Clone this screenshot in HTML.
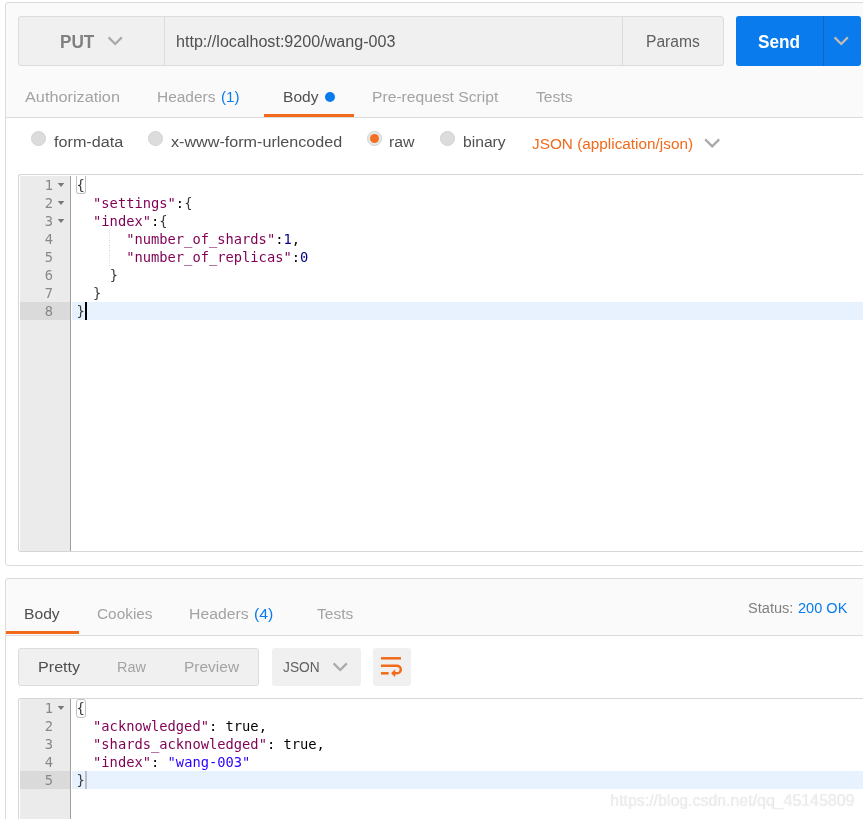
<!DOCTYPE html>
<html lang="en">
<head>
<meta charset="utf-8">
<title>PUT wang-003</title>
<style>
*{box-sizing:border-box;margin:0;padding:0}
html,body{width:863px;height:819px;overflow:hidden;background:#fff}
body{position:relative;will-change:transform;font-family:"Liberation Sans","DejaVu Sans",sans-serif;color:#505050}
.abs{position:absolute}
.t{position:absolute;white-space:nowrap;line-height:20px;height:20px;font-size:15.4px;transform-origin:0 50%}
.panel{position:absolute;background:#fafafa;border:1px solid #dbdbdb;border-radius:4px 0 0 4px;border-right:0}
.white{position:absolute;background:#fff}
.hl{position:absolute;background:#dbdbdb;height:1px}
.or{position:absolute;background:#f26a1b;height:3px}
.grey{color:#a3a3a3}
.blue{color:#097bed}
.radio{position:absolute;width:15px;height:15px;border-radius:50%;background:#dcdcdc;border:1px solid #d2d2d2}
.radio.on{background:#e6e9ec;border-color:#d0d0d0}
.radio.on::after{content:"";position:absolute;left:2px;top:2px;width:9px;height:9px;border-radius:50%;background:#f37021}
.mono{font-family:"DejaVu Sans Mono","Liberation Mono",monospace;font-size:13.76px;line-height:18px;white-space:pre;color:#000}
.editor{position:absolute;background:#fff;border:1px solid #d6d6d6;border-right:0;border-radius:3px 0 0 3px}
.gutter{position:absolute;background:#ebebeb}
.gline{position:absolute;width:1px;background:#a0a0a0}
.gact{position:absolute;background:#dadada;height:18px}
.act{position:absolute;background:#e8f2fe;height:18px}
.ln{position:absolute;text-align:right;color:#888}
.ln div,.code div{height:18px}
.code{position:absolute}
.k{color:#7f0055}
.n{color:#00008c}
.s{color:#2a00ff}
.b{color:#3c3c3c}
.brk{position:absolute;border:1px solid #c0c0c0;border-radius:3px;width:10px;height:19px}
.guide{position:absolute;width:1px;background-image:linear-gradient(#cfcfcf 50%,transparent 50%);background-size:1px 2.5px}
.cursor{position:absolute;width:2px;height:18px;background:#000}
/*FIT*/
#put{left:60.40px;transform:scaleX(0.9174)}
#url{left:176.00px;transform:scaleX(1.0069)}
#params{left:646.20px;transform:scaleX(0.9766)}
#send{left:757.50px;transform:scaleX(0.9205)}
#t_auth{left:25.45px;transform:scaleX(1.0572)}
#t_head{left:157.20px;transform:scaleX(1.0045)}
#t_head_n{left:221.20px;transform:scaleX(0.9853)}
#t_body{left:282.85px;transform:scaleX(1.0120)}
#t_pre{left:372.35px;transform:scaleX(1.0183)}
#t_tests{left:535.80px;transform:scaleX(1.0209)}
#r_form{left:53.85px;transform:scaleX(1.0511)}
#r_url{left:170.75px;transform:scaleX(1.0483)}
#r_raw{left:388.65px;transform:scaleX(1.0313)}
#r_bin{left:463.10px;transform:scaleX(1.0170)}
#r_json{left:532.10px;transform:scaleX(0.9963)}
#b_body{left:23.90px;transform:scaleX(1.0174)}
#b_cook{left:97.25px;transform:scaleX(0.9991)}
#b_head{left:188.90px;transform:scaleX(1.0247)}
#b_head_n{left:253.70px;transform:scaleX(1.0294)}
#b_tests{left:316.60px;transform:scaleX(1.0083)}
#status{left:748.10px;transform:scaleX(0.9474)}
#status_n{left:798.35px;transform:scaleX(0.9457)}
#v_pretty{left:38.40px;transform:scaleX(1.0483)}
#v_raw{left:116.70px;transform:scaleX(0.9354)}
#v_prev{left:184.40px;transform:scaleX(1.0061)}
#v_json{left:282.60px;transform:scaleX(0.8936)}
#wm{left:610.45px;transform:scaleX(0.9939)}
/*ENDFIT*/
</style>
</head>
<body>

<!-- ===== request panel ===== -->
<div class="panel" style="left:5px;top:2px;width:858px;height:564px"></div>
<div class="white" style="left:6px;top:118px;width:857px;height:447px;border-radius:0 0 0 3px"></div>
<div class="hl" style="left:6px;top:117px;width:857px"></div>

<!-- url bar -->
<div class="abs" style="left:18px;top:16px;width:706px;height:50px;background:#f0f0f0;border:1px solid #dcdcdc;border-radius:3px"></div>
<div class="abs" style="left:164px;top:17px;width:1px;height:48px;background:#dcdcdc"></div>
<div class="abs" style="left:622px;top:17px;width:1px;height:48px;background:#dcdcdc"></div>
<div class="t" id="put" style="top:32px;font-size:18.7px;font-weight:bold;color:#808080">PUT</div>
<svg class="abs" style="left:104px;top:32px" width="24" height="18" viewBox="0 0 24 18"><polyline points="4.6,5.4 11.2,12 17.8,5.4" fill="none" stroke="#a9a9a9" stroke-width="2.2"/></svg>
<div class="t" id="url" style="top:32px;font-size:16px;color:#505050">http://localhost:9200/wang-003</div>
<div class="t" id="params" style="top:31.5px;font-size:16px;color:#606060">Params</div>

<!-- send -->
<div class="abs" style="left:736px;top:16px;width:125px;height:50px;background:#097bed;border-radius:3px"></div>
<div class="abs" style="left:823px;top:16px;width:1px;height:50px;background:#0a67c4"></div>
<div class="t" id="send" style="top:32px;font-size:18.7px;font-weight:bold;color:#fff">Send</div>
<svg class="abs" style="left:830px;top:32px" width="24" height="18" viewBox="0 0 24 18"><polyline points="4.6,5.4 11.2,12 17.8,5.4" fill="none" stroke="#c3bdb5" stroke-width="2.2"/></svg>

<!-- request tabs -->
<div class="t grey" id="t_auth" style="top:87px">Authorization</div>
<div class="t grey" id="t_head" style="top:87px">Headers</div>
<div class="t blue" id="t_head_n" style="top:87px">(1)</div>
<div class="t" id="t_body" style="top:87px;color:#505050">Body</div>
<div class="abs" style="left:325px;top:92px;width:10px;height:10px;border-radius:50%;background:#097bed"></div>
<div class="or" style="left:264px;top:114px;width:90px"></div>
<div class="t grey" id="t_pre" style="top:87px">Pre-request Script</div>
<div class="t grey" id="t_tests" style="top:87px">Tests</div>

<!-- radios -->
<div class="radio" style="left:31px;top:131px"></div>
<div class="t" id="r_form" style="top:132px;color:#505050">form-data</div>
<div class="radio" style="left:148px;top:131px"></div>
<div class="t" id="r_url" style="top:132px;color:#505050">x-www-form-urlencoded</div>
<div class="radio on" style="left:367px;top:131px"></div>
<div class="t" id="r_raw" style="top:132px;color:#505050">raw</div>
<div class="radio" style="left:440px;top:131px"></div>
<div class="t" id="r_bin" style="top:132px;color:#505050">binary</div>
<div class="t" id="r_json" style="top:134px;color:#f26a1b">JSON (application/json)</div>
<svg class="abs" style="left:701px;top:134px" width="24" height="18" viewBox="0 0 24 18"><polyline points="4.2,5.4 11.2,12.4 18.2,5.4" fill="none" stroke="#a9a9a9" stroke-width="2.2"/></svg>

<!-- request editor -->
<div class="editor" style="left:18px;top:174px;width:845px;height:378px"></div>
<div class="gutter" style="left:20px;top:176px;width:50px;height:375px;border-radius:2px 0 0 2px"></div>
<div class="gline" style="left:70px;top:176px;height:375px"></div>
<div class="gact" style="left:20px;top:302px;width:50px"></div>
<div class="act" style="left:72px;top:302px;width:791px"></div>
<div class="ln mono" style="left:20px;top:176px;width:33px"><div>1</div><div>2</div><div>3</div><div>4</div><div>5</div><div>6</div><div>7</div><div>8</div></div>
<svg class="abs" style="left:57px;top:182px" width="8" height="6" viewBox="0 0 8 6"><path d="M0.7 0.9h6.6l-3.3 4.2z" fill="#777"/></svg>
<svg class="abs" style="left:57px;top:200px" width="8" height="6" viewBox="0 0 8 6"><path d="M0.7 0.9h6.6l-3.3 4.2z" fill="#777"/></svg>
<svg class="abs" style="left:57px;top:218px" width="8" height="6" viewBox="0 0 8 6"><path d="M0.7 0.9h6.6l-3.3 4.2z" fill="#777"/></svg>
<div class="brk" style="left:76px;top:176px;height:18px;border-top:0;border-radius:0 0 3px 3px"></div>
<div class="guide" style="left:109px;top:230px;height:36px"></div>
<div class="code mono" id="code1" style="left:76.5px;top:176px"><div><span class="b">{</span></div><div>  <span class="k">"settings"</span>:<span class="b">{</span></div><div>  <span class="k">"index"</span>:<span class="b">{</span></div><div>      <span class="k">"number_of_shards"</span>:<span class="n">1</span>,</div><div>      <span class="k">"number_of_replicas"</span>:<span class="n">0</span></div><div>    <span class="b">}</span></div><div>  <span class="b">}</span></div><div><span class="b">}</span></div></div>
<div class="cursor" style="left:85px;top:302px"></div>

<!-- ===== response panel ===== -->
<div class="panel" style="left:5px;top:578px;width:858px;height:260px"></div>
<div class="white" style="left:6px;top:636px;width:857px;height:190px"></div>
<div class="hl" style="left:6px;top:635px;width:857px"></div>
<div class="t" id="b_body" style="top:604px;color:#505050">Body</div>
<div class="or" style="left:6px;top:631px;width:73px"></div>
<div class="t grey" id="b_cook" style="top:604px">Cookies</div>
<div class="t grey" id="b_head" style="top:604px">Headers</div>
<div class="t blue" id="b_head_n" style="top:604px">(4)</div>
<div class="t grey" id="b_tests" style="top:604px">Tests</div>
<div class="t" id="status" style="top:598px;color:#808080">Status:</div>
<div class="t blue" id="status_n" style="top:598px">200 OK</div>

<!-- response toolbar -->
<div class="abs" style="left:18px;top:648px;width:241px;height:38px;background:#f0f0f0;border:1px solid #dcdcdc;border-radius:3px"></div>
<div class="t" id="v_pretty" style="top:657px;color:#505050">Pretty</div>
<div class="t grey" id="v_raw" style="top:657px">Raw</div>
<div class="t grey" id="v_prev" style="top:657px">Preview</div>
<div class="abs" style="left:272px;top:648px;width:89px;height:38px;background:#f0f0f0;border-radius:3px"></div>
<div class="t" id="v_json" style="top:657px;color:#606060">JSON</div>
<svg class="abs" style="left:329px;top:658px" width="24" height="18" viewBox="0 0 24 18"><polyline points="4.6,5.4 11.2,12 17.8,5.4" fill="none" stroke="#a9a9a9" stroke-width="2.2"/></svg>
<div class="abs" style="left:373px;top:648px;width:38px;height:38px;background:#f0f0f0;border-radius:3px"></div>
<svg class="abs" style="left:373px;top:648px" width="38" height="38" viewBox="0 0 38 38"><g fill="none" stroke="#f26a1b" stroke-width="2.5"><path d="M8 10.3H28"/><path d="M8 17.7H24a3.8 3.8 0 0 1 0 7.6H21.5"/><path d="M8 25.3H15.7"/></g><path d="M18 25.3L22.2 21.3V29.3Z" fill="#f26a1b"/></svg>

<!-- response editor -->
<div class="editor" style="left:18px;top:698px;width:845px;height:140px"></div>
<div class="gutter" style="left:20px;top:699px;width:50px;height:120px;border-radius:2px 0 0 0"></div>
<div class="gline" style="left:70px;top:699px;height:120px"></div>
<div class="gact" style="left:20px;top:771px;width:50px"></div>
<div class="act" style="left:72px;top:771px;width:791px"></div>
<div class="ln mono" style="left:20px;top:699px;width:33px"><div>1</div><div>2</div><div>3</div><div>4</div><div>5</div></div>
<svg class="abs" style="left:57px;top:705px" width="8" height="6" viewBox="0 0 8 6"><path d="M0.7 0.9h6.6l-3.3 4.2z" fill="#777"/></svg>
<div class="brk" style="left:76px;top:699px"></div>
<div class="code mono" id="code2" style="left:76.5px;top:699px"><div><span class="b">{</span></div><div>  <span class="k">"acknowledged"</span>: true,</div><div>  <span class="k">"shards_acknowledged"</span>: true,</div><div>  <span class="k">"index"</span>: <span class="s">"wang-003"</span></div><div><span class="b">}</span></div></div>
<div class="abs" style="left:85px;top:771px;width:2px;height:18px;background:#b9bec8"></div>

<!-- watermark -->
<div class="t" id="wm" style="top:791px;font-size:16px;color:#f1f1f1;text-shadow:0.3px 0.3px 0.7px #d4d4d4">https://blog.csdn.net/qq_45145809</div>

</body>
</html>
